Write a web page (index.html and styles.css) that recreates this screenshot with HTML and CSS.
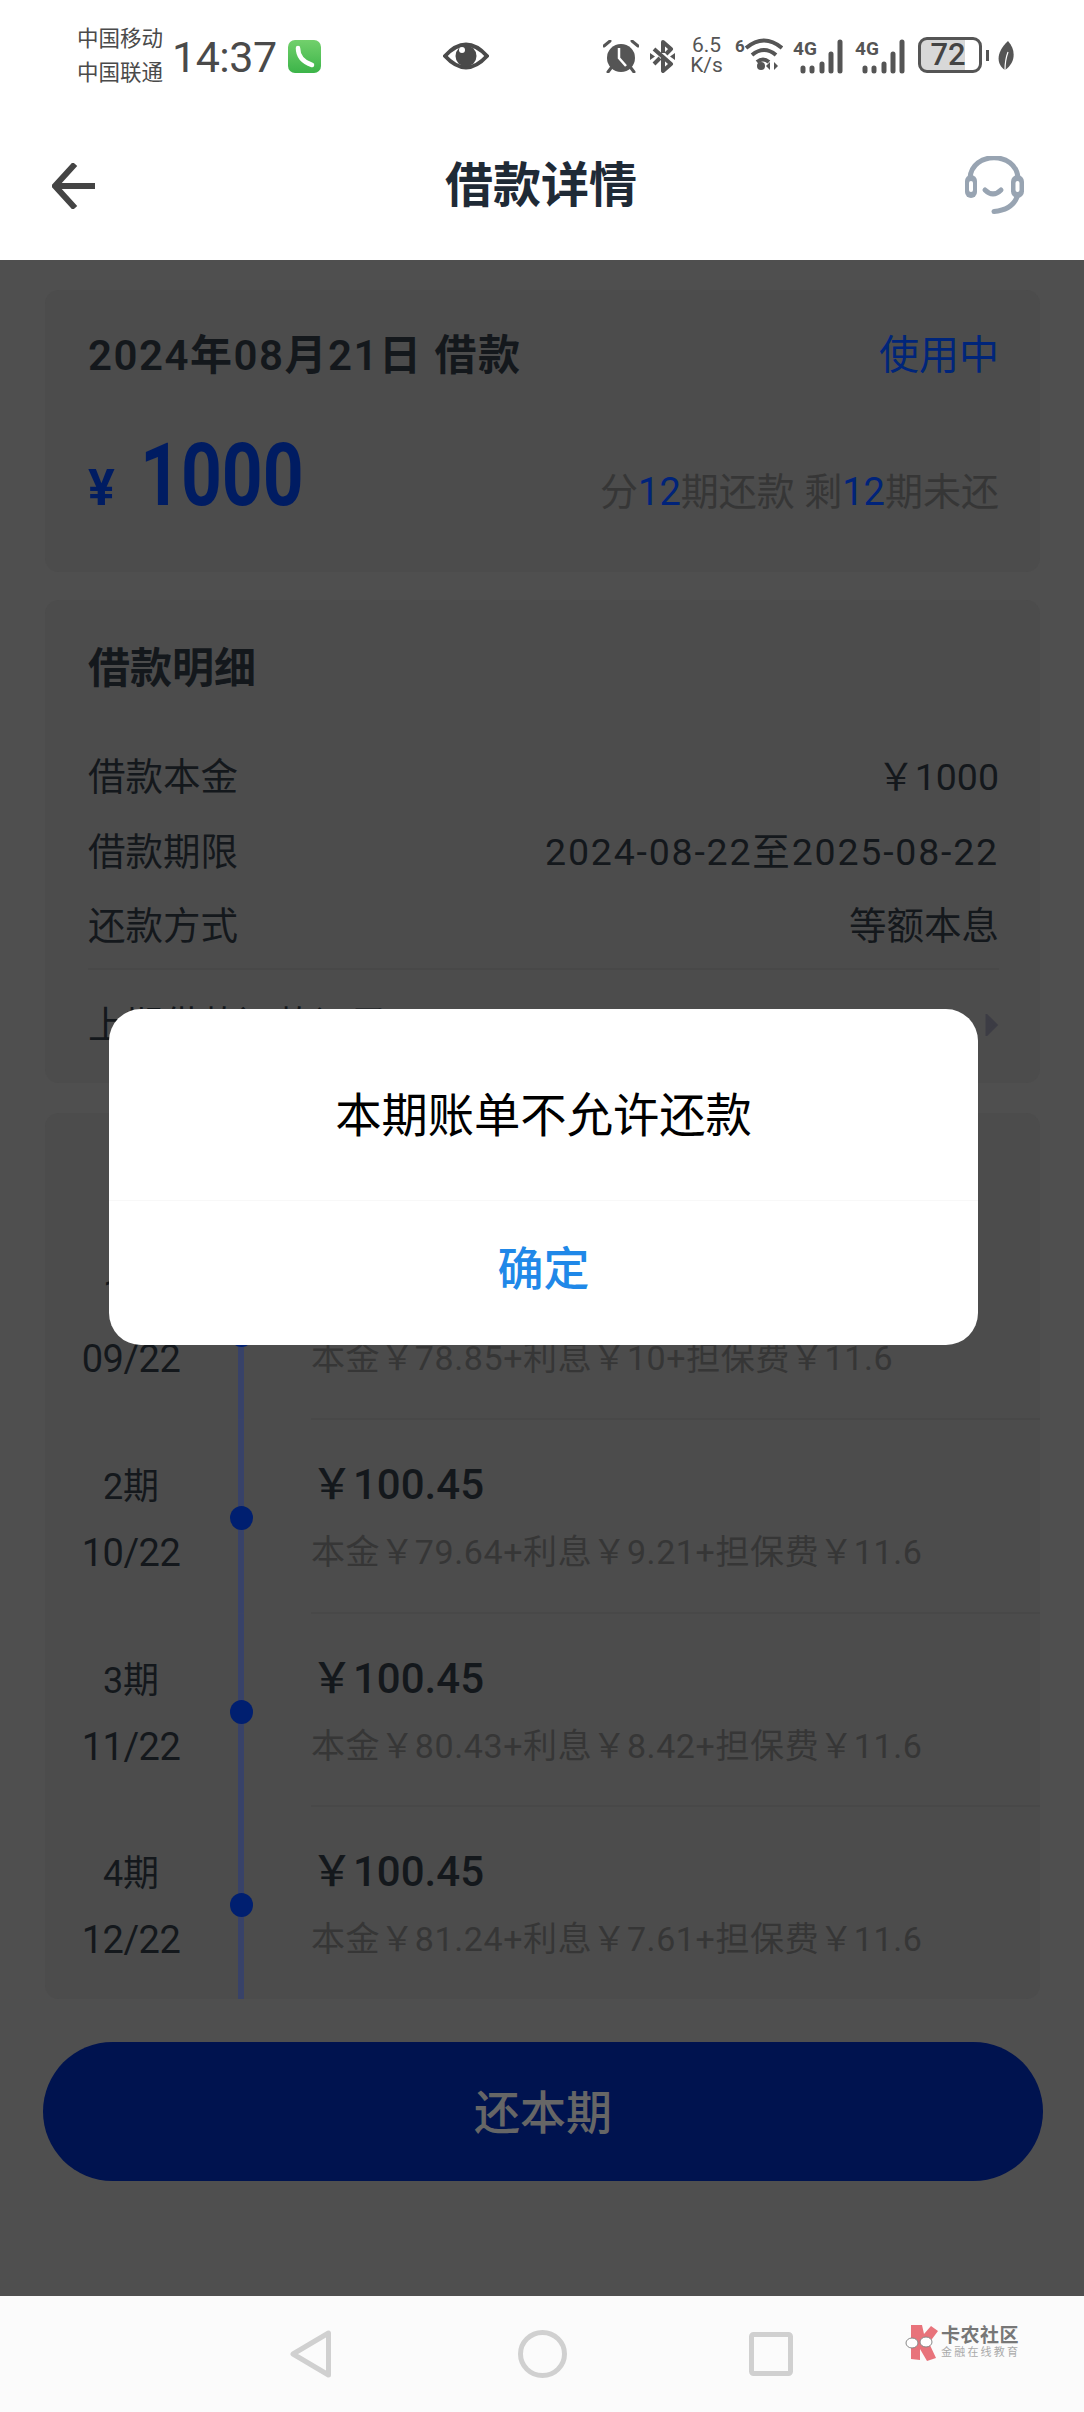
FILE: index.html
```html
<!DOCTYPE html>
<html lang="zh-CN">
<head>
  <meta charset="UTF-8">
  <title>借款详情</title>
  <link rel="stylesheet" href="styles.css">
</head>
<body>
<div class="screen">
  <header class="top">
    <div class="status">
      <div class="carrier"><span>中国移动</span><span>中国联通</span></div>
      <span class="time">14:37</span>
      <svg class="ico-phone" width="33" height="33" viewBox="0 0 33 33">
        <defs><linearGradient id="phoneBg" x1="0" y1="0" x2="0" y2="1"><stop offset="0" stop-color="#72d06c"/><stop offset="1" stop-color="#3cb449"/></linearGradient></defs>
        <rect width="33" height="33" rx="7" fill="url(#phoneBg)"/>
        <path d="M10 8C10 16 15 22 24 25" fill="none" stroke="#fff" stroke-width="4.5" stroke-linecap="round"/>
      </svg>
      <svg class="ico-eye" width="46" height="30" viewBox="0 0 46 30">
        <path d="M2 15Q23 -8 44 15Q23 38 2 15Z" fill="#fff" stroke="#4a4a4a" stroke-width="4"/>
        <circle cx="23" cy="15" r="10.5" fill="#4a4a4a"/>
        <circle cx="19" cy="9" r="3" fill="#fff"/>
      </svg>
      <svg class="ico-alarm" width="36" height="33" viewBox="0 0 36 33">
        <circle cx="18" cy="18" r="14" fill="#555"/>
        <path d="M16 8V18L23 26" fill="none" stroke="#fff" stroke-width="2.5"/>
        <path d="M1 6L7 1M29 1L35 6M8 28L5 32M28 28L31 32" fill="none" stroke="#555" stroke-width="3" stroke-linecap="round"/>
      </svg>
      <svg class="ico-bt" width="25" height="33" viewBox="0 0 25 33">
        <path d="M4 9L21 24L13 31V17M13 13V2L21 9L16 14M10 18L4 24" fill="none" stroke="#555" stroke-width="4" stroke-linejoin="round"/>
        <path d="M0 13L5 16.500L0 20ZM25 13L20 16.500L25 20Z" fill="#555"/>
      </svg>
      <div class="speed"><span>6.5</span><span>K/s</span></div>
      <svg class="ico-wifi" width="48" height="39" viewBox="0 0 48 39">
        <text x="0" y="18" class="ico-text ico-text-sm">6</text>
        <g transform="translate(0 3)">
          <path d="M11 11Q29 -4 47 11M17 18Q29 8 41 18M22 25Q28 20 34 25" fill="none" stroke="#555" stroke-width="4"/>
          <circle cx="26" cy="29" r="4" fill="#555"/>
          <path d="M35 25V33L31 29ZM39 25V33L43 29Z" fill="#555"/>
        </g>
      </svg>
      <svg class="ico-signal" width="50" height="39" viewBox="0 0 50 39">
        <text x="0" y="20" class="ico-text">4G</text>
        <path d="M10 33V36M19 33V36M29 29V36M38 19V36M47 7V36" fill="none" stroke="#555" stroke-width="5" stroke-linecap="round"/>
      </svg>
      <svg class="ico-signal ico-signal-2" width="50" height="39" viewBox="0 0 50 39">
        <text x="0" y="20" class="ico-text">4G</text>
        <path d="M10 33V36M19 33V36M29 29V36M38 19V36M47 7V36" fill="none" stroke="#555" stroke-width="5" stroke-linecap="round"/>
      </svg>
      <div class="battery">72</div>
      <span class="nib"></span>
      <svg class="ico-leaf" width="17" height="29" viewBox="0 0 17 29">
        <path d="M11 0C19 9 19 21 8 29C-1 23 -1 11 11 0Z" fill="#555"/>
        <path d="M8 29Q8 19 11 11" fill="none" stroke="#fff" stroke-width="1.200"/>
      </svg>
    </div>
    <div class="navbar">
      <svg width="44" height="46" viewBox="0 0 44 46">
        <path d="M43 23H4M23 1L3 23L23 45" fill="none" stroke="#444" stroke-width="6"/>
      </svg>
      <h1>借款详情</h1>
      <svg width="61" height="60" viewBox="0 0 61 60">
        <path d="M6 22C8 -5 52 -5 54 22" fill="none" stroke="#98a4b2" stroke-width="5"/>
        <rect x="1" y="19" width="12" height="23" rx="6" fill="#98a4b2"/>
        <rect x="5" y="25" width="4" height="11" rx="2" fill="#fff"/>
        <rect x="47" y="19" width="13" height="23" rx="6.500" fill="#98a4b2"/>
        <rect x="51.500" y="25" width="4" height="11" rx="2" fill="#fff"/>
        <path d="M21 34Q29 42 37 34" fill="none" stroke="#98a4b2" stroke-width="5" stroke-linecap="round"/>
        <path d="M53 41Q48 54 30 55.500" fill="none" stroke="#98a4b2" stroke-width="5" stroke-linecap="round"/>
      </svg>
    </div>
  </header>

  <main class="content">
    <section class="card card-summary">
      <div class="summary-head">
        <span class="summary-date">2024年08月21日 借款</span>
        <span class="summary-state">使用中</span>
      </div>
      <div class="summary-amount">
        <span class="amount"><small>¥</small><span class="amount-num">1000</span></span>
        <span class="periods">分<b>12</b>期还款 剩<b>12</b>期未还</span>
      </div>
    </section>

    <section class="card card-detail">
      <h2>借款明细</h2>
      <div class="detail-row"><span>借款本金</span><span>&#xFFE5;1000</span></div>
      <div class="detail-row"><span>借款期限</span><span class="range">2024-08-22至2025-08-22</span></div>
      <div class="detail-row"><span>还款方式</span><span>等额本息</span></div>
      <div class="detail-link">
        <span>上期借款还款记录</span>
        <svg width="14" height="22" viewBox="0 0 14 22"><path d="M2 2L11 11L2 20Z" fill="#3c3c44" stroke="#3c3c44" stroke-width="3"/></svg>
      </div>
    </section>

    <section class="card card-plan">
      <div class="plan-row plan-row-first">
        <div class="when"><span>1期</span><span class="when-date">09/22</span></div>
        <div class="axis"><i class="dot"></i></div>
        <div class="bill"><strong>&#xFFE5;100.45</strong><span>本金&#xFFE5;78.85+利息&#xFFE5;10+担保费&#xFFE5;11.6</span></div>
      </div>
      <div class="plan-row">
        <div class="when"><span>2期</span><span class="when-date">10/22</span></div>
        <div class="axis"><i class="dot"></i></div>
        <div class="bill"><strong>&#xFFE5;100.45</strong><span>本金&#xFFE5;79.64+利息&#xFFE5;9.21+担保费&#xFFE5;11.6</span></div>
      </div>
      <div class="plan-row">
        <div class="when"><span>3期</span><span class="when-date">11/22</span></div>
        <div class="axis"><i class="dot"></i></div>
        <div class="bill"><strong>&#xFFE5;100.45</strong><span>本金&#xFFE5;80.43+利息&#xFFE5;8.42+担保费&#xFFE5;11.6</span></div>
      </div>
      <div class="plan-row">
        <div class="when"><span>4期</span><span class="when-date">12/22</span></div>
        <div class="axis"><i class="dot"></i></div>
        <div class="bill bill-last"><strong>&#xFFE5;100.45</strong><span>本金&#xFFE5;81.24+利息&#xFFE5;7.61+担保费&#xFFE5;11.6</span></div>
      </div>
    </section>

    <button class="pay">还本期</button>
  </main>

  <footer class="sysnav">
    <svg width="42" height="48" viewBox="0 0 42 48"><path d="M38.500 3V45L3 24Z" fill="none" stroke="#d0d0d0" stroke-width="5" stroke-linejoin="round"/></svg>
    <svg width="49" height="48" viewBox="0 0 49 48"><ellipse cx="24.500" cy="24" rx="22" ry="21.500" fill="none" stroke="#d0d0d0" stroke-width="5"/></svg>
    <svg width="44" height="44" viewBox="0 0 44 44"><rect x="2.500" y="2.500" width="39" height="39" rx="2" fill="none" stroke="#d0d0d0" stroke-width="5"/></svg>
    <div class="watermark">
      <svg width="34" height="36" viewBox="0 0 34 36">
        <path d="M6 0H17L19 9L26 1L33 6L24 18L31 33L22 36L15 24L15 35L6 34Z" fill="#e8737b"/>
        <ellipse cx="7" cy="18" rx="6" ry="5" fill="#fff" stroke="#888" stroke-width="1"/>
        <ellipse cx="21" cy="17" rx="6" ry="5" fill="#fff" stroke="#888" stroke-width="1"/>
      </svg>
      <div class="watermark-text"><b>卡农社区</b><span>金融在线教育</span></div>
    </div>
  </footer>

  <div class="dialog">
    <div class="dialog-msg">本期账单不允许还款</div>
    <div class="dialog-btn">确定</div>
  </div>
</div>
</body>
</html>
```

FILE: styles.css
```css
* { box-sizing: border-box; }

body {
  margin: 0;
  font-family: Roboto, "Noto Sans CJK SC", sans-serif;
}

.screen {
  position: relative;
  width: 1084px;
  height: 2412px;
  overflow: hidden;
  display: flex;
  flex-direction: column;
  background: #4f4f4f;
}

/* top white part */
.top {
  height: 260px;
  background: #fff;
}
.status {
  height: 112px;
  padding-left: 77px;
  display: flex;
  align-items: flex-start;
  color: #4a4a4a;
}
.carrier {
  width: 86px;
  margin-top: 22px;
  display: flex;
  flex-direction: column;
  font-size: 21.500px;
  line-height: 34px;
  white-space: nowrap;
}
.time {
  width: 104px;
  margin: 28px 0 0 9px;
  font-size: 43px;
  line-height: 58px;
  letter-spacing: -0.5px;
}
.ico-phone { margin: 40px 0 0 12px; }
.ico-eye { margin: 41px 0 0 122px; }
.ico-alarm { margin: 40px 0 0 114px; }
.ico-bt { margin: 40px 0 0 11px; }
.speed {
  width: 33px;
  margin: 35px 0 0 15px;
  display: flex;
  flex-direction: column;
  align-items: center;
  font-size: 21px;
  line-height: 20px;
  color: #555;
}
.ico-wifi { margin: 34px 0 0 12px; }
.ico-signal { margin: 35px 0 0 10px; }
.ico-signal-2 { margin-left: 12px; }
.ico-text {
  font-size: 19px;
  font-weight: 700;
  fill: #555;
}
.ico-text-sm { font-size: 17px; }
.battery {
  width: 64px;
  height: 36px;
  margin: 37px 0 0 13px;
  padding-right: 4px;
  border: 3px solid #555;
  border-radius: 9px;
  background: linear-gradient(90deg, #d8d8d8 0 76%, #fff 76%);
  font-size: 31px;
  font-weight: 500;
  line-height: 30px;
  text-align: center;
  color: #444;
}
.nib {
  width: 3px;
  height: 11px;
  margin: 50px 0 0 4px;
  background: #555;
}
.ico-leaf { margin: 41px 0 0 8px; }

.navbar {
  height: 148px;
  padding: 0 59px 0 52px;
  display: flex;
  align-items: center;
}
.navbar h1 {
  flex: 1;
  margin: 0;
  padding-left: 22px;
  font-size: 48px;
  line-height: 60px;
  font-weight: 700;
  text-align: center;
  color: #1f2a36;
}

/* dimmed page under the dialog */
.content {
  height: 2036px;
  padding: 30px 44px 0 45px;
}
.card {
  background: #4c4c4c;
  border-radius: 14px;
}
.card-summary {
  height: 282px;
  padding: 42px 41px 0 43px;
}
.summary-head {
  display: flex;
  justify-content: space-between;
  line-height: 48px;
}
.summary-date {
  font-size: 42px;
  font-weight: 600;
  letter-spacing: 1.500px;
  color: #14181c;
}
.summary-state {
  font-size: 40px;
  color: #00257a;
}
.summary-amount {
  margin-top: 45px;
  display: flex;
  justify-content: space-between;
  align-items: baseline;
  line-height: 100px;
}
.amount {
  font-size: 87px;
  font-weight: 700;
  color: #001c62;
}
.amount small {
  margin-right: 25px;
  font-size: 50px;
}
.amount-num {
  display: inline-block;
  transform: scaleX(0.82);
  transform-origin: left center;
}
.periods {
  font-size: 38px;
  color: #363636;
}
.periods b {
  font-weight: 400;
  color: #00237a;
}

.card-detail {
  height: 483px;
  margin-top: 28px;
  padding: 45px 41px 0 43px;
}
.card-detail h2 {
  margin: 0 0 47px;
  font-size: 42px;
  line-height: 48px;
  font-weight: 600;
  color: #14181c;
}
.detail-row {
  display: flex;
  justify-content: space-between;
  font-size: 37.500px;
  line-height: 74.500px;
  color: #14181c;
}
.range { letter-spacing: 1.800px; }
.detail-link {
  margin-top: 4px;
  padding-top: 18px;
  border-top: 2px solid #484848;
  display: flex;
  justify-content: space-between;
  align-items: center;
  font-size: 37.500px;
  line-height: 74px;
  color: #14181c;
}

.card-plan {
  height: 886px;
  margin-top: 30px;
  padding-top: 113px;
  overflow: hidden;
}
.plan-row {
  height: 193.800px;
  display: flex;
}
.when {
  width: 172px;
  padding-top: 44px;
  display: flex;
  flex-direction: column;
  align-items: center;
  font-size: 36px;
  line-height: 46px;
  color: #14181c;
}
.when-date {
  margin-top: 20px;
  font-size: 38px;
  letter-spacing: -0.5px;
}
.axis {
  width: 48px;
  display: flex;
  flex-direction: column;
  align-items: center;
  background: linear-gradient(#384268, #384268) center / 6px 100% no-repeat;
}
.dot {
  width: 23px;
  height: 24px;
  margin-top: 86px;
  border-radius: 50%;
  background: #001f70;
}
.plan-row-first .dot { margin-top: 97px; }
.bill {
  flex: 1;
  margin-left: 46px;
  padding-top: 42px;
  border-bottom: 2px solid #484848;
  display: flex;
  flex-direction: column;
  line-height: 46px;
}
.bill-last { border-bottom: 0; }
.bill strong {
  font-size: 42px;
  font-weight: 500;
  color: #14181c;
}
.bill span {
  margin-top: 21px;
  font-size: 34px;
  letter-spacing: 0.6px;
  color: #363636;
}

.pay {
  display: block;
  width: 1000px;
  height: 139px;
  margin: 43px 0 0 -2px;
  padding-bottom: 6px;
  border: 0;
  border-radius: 70px;
  background: #00134f;
  font-family: inherit;
  font-size: 46px;
  font-weight: 500;
  color: #666;
}

/* system navigation */
.sysnav {
  height: 116px;
  padding-left: 290px;
  background: #fbfbfb;
  display: flex;
  align-items: flex-start;
}
.sysnav > svg { margin-top: 34px; }
.sysnav > svg:nth-child(2) { margin-left: 186px; }
.sysnav > svg:nth-child(3) { margin-left: 182px; margin-top: 36px; }
.watermark {
  margin: 29px 0 0 112px;
  display: flex;
  gap: 2px;
}
.watermark-text {
  display: flex;
  flex-direction: column;
  color: #777;
}
.watermark-text b {
  font-size: 19px;
  line-height: 21px;
  letter-spacing: 0.5px;
}
.watermark-text span {
  font-size: 11px;
  line-height: 14px;
  letter-spacing: 2.200px;
  color: #aaa;
}

/* dialog */
.dialog {
  position: absolute;
  left: 109px;
  top: 1009px;
  width: 869px;
  height: 336px;
  border-radius: 32px;
  background: #fff;
  text-align: center;
}
.dialog-msg {
  height: 192px;
  padding-top: 79px;
  border-bottom: 1px solid #f8f8f8;
  font-size: 46.300px;
  line-height: 56px;
  color: #000;
}
.dialog-btn {
  padding-top: 40px;
  font-size: 46px;
  font-weight: 500;
  line-height: 56px;
  color: #2088e8;
}
```
